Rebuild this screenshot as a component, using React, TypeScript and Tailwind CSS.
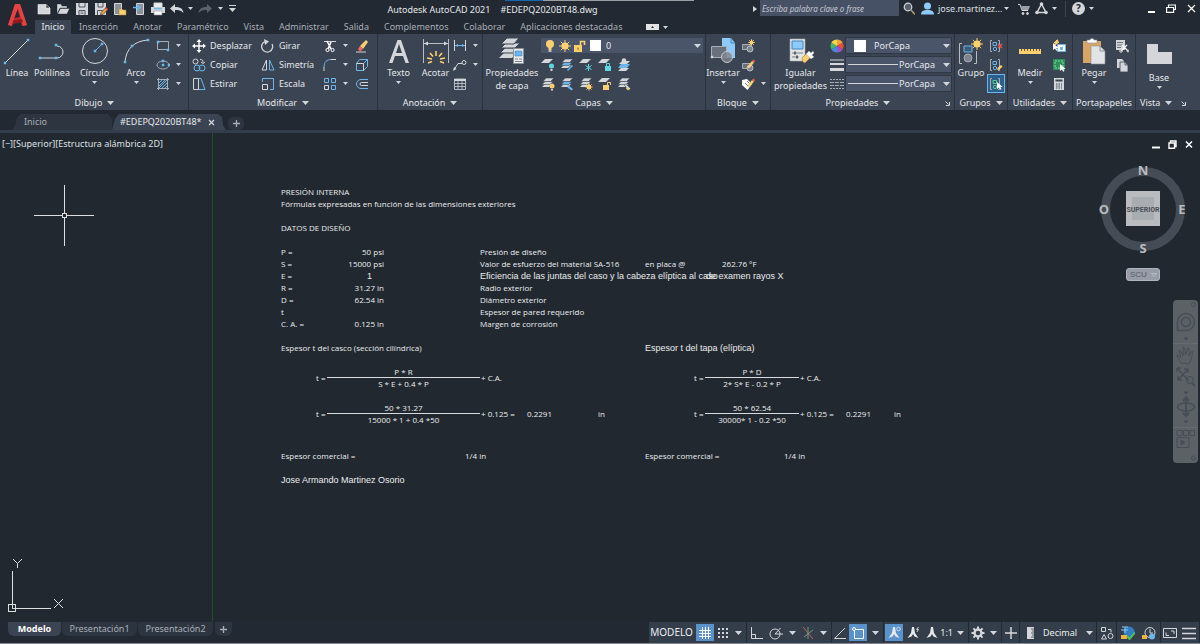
import type { ReactNode } from "react";
import clsx from "clsx";

// Palette shared by the icons
const G = "#d4d6d9";
const B = "#6cb6ec";
const Y = "#fdd06f";

type IconProps = { children: ReactNode; w?: number; h?: number };

const Icon = ({ children, w = 14, h = 14 }: IconProps) => (
  <svg
    width={w}
    height={h}
    viewBox={`0 0 ${w} ${h}`}
    fill="none"
    stroke={G}
    className="block shrink-0"
    aria-hidden="true"
  >
    {children}
  </svg>
);

const Caret = ({ small }: { small?: boolean }) =>
  small ? (
    <Icon w={5} h={3}>
      <path d="M0 0h5L2.5 3z" fill={G} stroke="none" />
    </Icon>
  ) : (
    <Icon w={7} h={4}>
      <path d="M0 0h7L3.5 4z" fill={G} stroke="none" />
    </Icon>
  );

// Small squares on the grip points of the draw tools
const Grip = ({ x, y }: { x: number; y: number }) => (
  <rect x={x - 1} y={y - 1} width="2" height="2" fill={B} stroke={B} strokeWidth="0.5" />
);

// ---------- Quick access toolbar ----------

const QUICK_ICONS: { label: string; icon: ReactNode }[] = [
  {
    label: "Nuevo",
    icon: <path d="M1 2.500h8l4 3.500v6H1z M9 2.500V6h4" fill={G} stroke="#f1f1f1" strokeWidth="0.6" />,
  },
  {
    label: "Abrir",
    icon: <path d="M1 12V2h4l1 2h5v2H4z M4.500 6.500H13.500L11 12H1.500z" fill={G} stroke="#222933" strokeWidth="0.4" />,
  },
  {
    label: "Guardar",
    icon: (
      <>
        <path d="M1 1h12v12H1z" fill={G} stroke="none" />
        <path d="M4 1v4h6V1 M4 13V8.500h6V13" stroke="#505762" />
        <path d="M5.500 10h3M5.500 11.500h3" stroke="#505762" strokeWidth="0.7" />
      </>
    ),
  },
  {
    label: "Guardar como",
    icon: (
      <>
        <path d="M1 1h11v12H1z" fill={G} stroke="none" />
        <path d="M4 1v4h5V1 M3.500 13V8.500h5" stroke="#505762" />
        <path d="M6.500 13l.5-2.500 5-5 2 2-5 5z" fill="#e6a04c" stroke="#222933" strokeWidth="0.6" />
        <path d="M11.500 5.500l2 2" stroke="#d8473c" strokeWidth="1.500" />
      </>
    ),
  },
  {
    label: "Abrir desde Web y Mobile",
    icon: (
      <>
        <path d="M1.500 1.500h7v11h-7z" fill="#8c9097" stroke={G} />
        <path d="M6 13V7h3l1 1h3v5z" fill={Y} stroke="#a8864a" strokeWidth="0.6" />
      </>
    ),
  },
  {
    label: "Guardar en Web y Mobile",
    icon: (
      <>
        <path d="M4.500 1.500h7v11h-7z" fill="#8c9097" stroke={G} />
        <path d="M1 5.500h5M4.500 2.500L8 5.500l-3.500 3" stroke={B} strokeWidth="1.600" />
      </>
    ),
  },
  {
    label: "Trazar",
    icon: (
      <>
        <path d="M3 5V1h8v4" fill="#eee" stroke={G} />
        <path d="M0 5h14v6H0z" fill={G} stroke="none" />
        <path d="M3 6.500h8" stroke={B} strokeWidth="1.500" />
        <path d="M3 9h8v4H3z" fill="#fff" stroke="#8c9097" strokeWidth="0.6" />
      </>
    ),
  },
];

const QuickAccess = () => (
  <div className="flex items-center">
    {QUICK_ICONS.map((q) => (
      <button key={q.label} aria-label={q.label} className="flex w-[19px] justify-center">
        <Icon>{q.icon}</Icon>
      </button>
    ))}
    <button aria-label="Deshacer" className="flex w-[19px] justify-center">
      <Icon>
        <path d="M0 6.500l5-4.500v3c5 0 8 1.500 8.500 6-2-2.500-5-3-8.500-3V11z" fill={G} stroke="none" />
      </Icon>
    </button>
    <button aria-label="Más deshacer" className="flex w-2 justify-center">
      <Caret small />
    </button>
    <button aria-label="Rehacer" className="flex w-[22px] justify-center">
      <Icon>
        <path d="M14 6.500L9 2v3C4 5 1 6.500 .500 11c2-2.500 5-3 8.500-3v3z" fill="#5b616b" stroke="none" />
      </Icon>
    </button>
    <button aria-label="Más rehacer" className="flex w-2 justify-center">
      <Caret small />
    </button>
    <button aria-label="Personalizar" className="flex w-4 justify-center">
      <Icon w={7} h={7}>
        <path d="M0 .500h7" />
        <path d="M0 3h7L3.500 7z" fill={G} stroke="none" />
      </Icon>
    </button>
  </div>
);

const MENU_TABS = [
  "Inserción",
  "Anotar",
  "Paramétrico",
  "Vista",
  "Administrar",
  "Salida",
  "Complementos",
  "Colaborar",
  "Aplicaciones destacadas",
];

const Header = () => (
  <header className="relative flex h-[34px] bg-[#222933]">
    {/* Loading strip over the title bar */}
    <div className="absolute right-[506px] top-0 flex h-px w-[189px]">
      <span className="w-[38px] bg-[#1269b0]" />
      <span className="flex-1 bg-[#9a9da2]" />
    </div>
    <button aria-label="Menú de la aplicación" className="flex w-[34px] shrink-0 items-start justify-center pl-[2px] pt-[3px]">
      <svg width="20" height="24" viewBox="0 0 20 24" aria-hidden="true">
        <path d="M0 22L7 1h5l7 21-5 1-2-6-7 1-1 5z" fill="#c4252b" />
        <path d="M7 1h5l7 21-4 1L10 5 5 18l-1 5-4-1z" fill="#e04545" />
        <path d="M9.500 7l2.500 7-5.500 1z" fill="#222933" />
        <path d="M5 18l9-2 1 3-10 2z" fill="#921b20" />
      </svg>
    </button>
    <div className="flex min-w-0 flex-1 flex-col">
      <div className="flex h-[17px] items-center">
        <QuickAccess />
        <div className="flex min-w-0 flex-1 justify-center self-stretch pr-2">
          <h1 className="flex gap-[10px] whitespace-pre text-[9px] leading-[19px] text-[#e6e8ea]">
            <span>Autodesk AutoCAD 2021</span>
            <span>#EDEPQ2020BT48.dwg</span>
          </h1>
        </div>
        <div className="flex w-[447px] shrink-0 items-center self-stretch">
          <Icon w={4} h={6}>
            <path d="M0 0l4 3-4 3z" fill={G} stroke="none" />
          </Icon>
          <input
            type="text"
            aria-label="Buscar"
            placeholder="Escriba palabra clave o frase"
            className="ml-[3px] h-4 w-[139px] self-start bg-[#475166] px-[2px] text-[8px] italic text-white placeholder:text-[#c3c7ce]"
          />
          <button aria-label="Buscar" className="ml-1">
            <Icon w={12} h={13}>
              <circle cx="5" cy="5" r="3.800" fill="#59606d" strokeWidth="1.200" />
              <path d="M8 8l4 4.500" stroke="#b39b6c" strokeWidth="1.600" />
            </Icon>
          </button>
          <button className="ml-[6px] flex items-center gap-1 text-[9px] leading-[16px] text-[#dfe1e4]">
            <Icon w={13} h={13}>
              <circle cx="6.500" cy="4" r="3.500" fill="#8ecbfb" stroke="none" />
              <path d="M0 12.500c0-3 2-4 4.500-4.500h4c2.500.500 4.500 1.500 4.500 4.500z" fill="#8ecbfb" stroke="none" />
            </Icon>
            <span className="w-[62px] text-left">jose.martinez...</span>
            <Caret small />
          </button>
          <button aria-label="Autodesk App Store" className="ml-[9px]">
            <Icon w={12} h={12}>
              <path d="M0 1.500h2l2 6h6" />
              <path d="M3 3h9l-1.500 4H4z" fill="#9a9ea6" stroke="none" />
              <circle cx="5" cy="10.500" r="1" fill={G} />
              <circle cx="9.500" cy="10.500" r="1" fill={G} />
            </Icon>
          </button>
          <button aria-label="Autodesk 360" className="ml-[5px] flex items-center gap-1">
            <Icon w={13} h={13}>
              <path d="M6.500 2L2 10.500h9L6.500 2z" strokeWidth="1.500" />
              <circle cx="6.500" cy="2" r="1.800" fill={G} stroke="none" />
              <circle cx="2" cy="10.500" r="1.800" fill={G} stroke="none" />
              <circle cx="11" cy="10.500" r="1.800" fill={G} stroke="none" />
            </Icon>
            <Caret small />
          </button>
          <span className="ml-2 h-4 w-px bg-[#3c4553]" />
          <button aria-label="Ayuda" className="ml-[6px] flex items-center gap-1">
            <span className="size-[13px] rounded-full bg-[#d4d6d9] text-[10px] font-bold leading-[13px] text-[#222933]">?</span>
            <Caret small />
          </button>
          <div className="ml-auto flex w-[52px] items-center justify-between pr-1">
            <button aria-label="Minimizar">
              <Icon w={7} h={9}>
                <path d="M0 8h7" stroke="#fff" strokeWidth="2" />
              </Icon>
            </button>
            <button aria-label="Restaurar">
              <Icon w={10} h={9}>
                <path d="M2.500 3V1h7v4.500H8" stroke="#fff" strokeWidth="1.200" />
                <path d="M.600 3.500h7v4.900h-7z" stroke="#fff" strokeWidth="1.200" />
              </Icon>
            </button>
            <button aria-label="Cerrar">
              <Icon w={9} h={9}>
                <path d="M1 1l7 7M8 1L1 8" stroke="#fff" strokeWidth="1.300" />
              </Icon>
            </button>
          </div>
        </div>
      </div>
      <nav className="flex h-[17px] items-end text-[9px] leading-[14px] text-[#a9aeb6]">
        <button className="ml-px w-9 bg-[#3b4453] text-[#e6e8ea]">Inicio</button>
        <div className="flex gap-[15px] pl-2">
          {MENU_TABS.map((tab) => (
            <button key={tab}>{tab}</button>
          ))}
        </div>
        <button aria-label="Minimizar cinta" className="ml-6 flex h-[14px] items-center gap-1">
          <Icon w={13} h={6}>
            <path d="M0 0h13v6H0z" fill="#e4e4e4" stroke="none" />
            <path d="M5 4h3L6.500 2z" fill="#222933" stroke="none" />
          </Icon>
          <Caret small />
        </button>
      </nav>
    </div>
  </header>
);

// ---------- Ribbon building blocks ----------

type PanelProps = {
  title: string;
  className?: string;
  menu?: boolean;
  launcher?: boolean;
  children: ReactNode;
};

const Panel = ({ title, className, menu = true, launcher, children }: PanelProps) => (
  <section className={clsx("flex shrink-0 flex-col border-r border-[#2b323e] bg-[#3b4453]", className)}>
    <div className="flex h-[62px] pt-[2px]">{children}</div>
    <div className="flex h-[14px] items-center">
      <button className="flex flex-1 items-center justify-center gap-[5px] whitespace-nowrap leading-[14px]">
        {title}
        {menu && <Caret />}
      </button>
      {launcher && (
        <button aria-label={`Cuadro de ${title}`} className="pr-1">
          <Icon w={5} h={5}>
            <path d="M.500.500l3 3M4.500 1v3.500H1" />
          </Icon>
        </button>
      )}
    </div>
  </section>
);

type BigButtonProps = { label: string; icon: ReactNode; className?: string; caret?: boolean };

const BigButton = ({ label, icon, className, caret }: BigButtonProps) => (
  <button className={clsx("flex shrink-0 flex-col items-center", className)}>
    <span className="flex h-[30px] items-center">
      <Icon w={28} h={28}>
        {icon}
      </Icon>
    </span>
    <span className="whitespace-pre leading-[13px]">{label}</span>
    {caret && (
      <span className="mt-[2px]">
        <Caret small />
      </span>
    )}
  </button>
);

type ToolProps = { name: string; icon: ReactNode; text?: boolean; caret?: boolean; active?: boolean };

const Tool = ({ name, icon, text, caret, active }: ToolProps) => (
  <button
    aria-label={name}
    className={clsx("flex h-[19px] shrink-0 items-center gap-1", active && "bg-[#2c5f8a] px-[2px] outline outline-[#6cb6ec] -outline-offset-1")}
  >
    <Icon>{icon}</Icon>
    {text && <span>{name}</span>}
    {caret && (
      <span className="pl-[2px]">
        <Caret small />
      </span>
    )}
  </button>
);

// Stack of sheets used by every layer tool
const Sheets = ({ tint = G }: { tint?: string }) => (
  <g stroke="none">
    <path d="M1 10l3-3h7l-3 3z" fill={G} />
    <path d="M1 7.500l3-3h8l-3 3z" fill={tint} stroke="#3b4453" strokeWidth="0.6" />
    <path d="M2 4.500L5 1h8L9.500 4.500z" fill={G} stroke="#3b4453" strokeWidth="0.6" />
  </g>
);

const Sheet = () => <path d="M0 5l4-4h8L8 5z" fill={G} stroke="none" />;

const Sun = ({ x, y, r = 2 }: { x: number; y: number; r?: number }) => (
  <g stroke={Y} strokeWidth="1">
    <circle cx={x} cy={y} r={r * 1.2} fill={Y} stroke="none" />
    <path
      d={`M${x - 2 * r} ${y}h${4 * r}M${x} ${y - 2 * r}v${4 * r}M${x - 1.4 * r} ${y - 1.4 * r}l${2.8 * r} ${2.8 * r}M${x + 1.4 * r} ${y - 1.4 * r}l${-2.8 * r} ${2.8 * r}`}
    />
  </g>
);

const Cursor = ({ x, y }: { x: number; y: number }) => (
  <path d={`M${x} ${y}v7l2-1.500 1.200 2.300 1.300-.700-1.200-2.200h2.300z`} fill="#fff" stroke="none" />
);

const Pencil = () => (
  <>
    <path d="M7 8l4-5 2 1.500-4 5-2.500 1z" fill={Y} stroke="none" />
    <path d="M11 3l1.200-1.500 2 1.500L13 4.500z" fill="#e8574b" stroke="none" />
  </>
);

const DrawPanel = () => (
  <Panel title="Dibujo" className="w-[188px]">
    <BigButton
      label="Línea"
      className="w-8"
      icon={
        <>
          <path d="M2 26L25 3" />
          <Grip x={2} y={26} />
          <Grip x={25} y={3} />
        </>
      }
    />
    <BigButton
      label="Polilínea"
      className="w-[38px]"
      icon={
        <>
          <path d="M2 21h17a6 6 0 0 0 0-12" />
          <Grip x={2} y={21} />
          <Grip x={18} y={21} />
          <Grip x={18} y={8} />
        </>
      }
    />
    <BigButton
      label="Círculo"
      className="w-[47px]"
      caret
      icon={
        <>
          <circle cx="14" cy="14" r="12.500" />
          <path d="M14 14l7-7" stroke={B} />
          <Grip x={14} y={14} />
          <Grip x={21} y={7} />
        </>
      }
    />
    <BigButton
      label="Arco"
      className="w-[36px]"
      caret
      icon={
        <>
          <path d="M3 25C4 12 12 4 26 3" />
          <Grip x={3} y={25} />
          <Grip x={10} y={9} />
          <Grip x={26} y={3} />
        </>
      }
    />
    <div className="pl-[2px]">
      <Tool
        name="Rectángulo"
        caret
        icon={
          <>
            <path d="M1.500 2.500h11v8h-11z" stroke="#a9adb4" />
            <Grip x={2} y={3} />
            <Grip x={12} y={11} />
          </>
        }
      />
      <Tool
        name="Elipse"
        caret
        icon={
          <>
            <ellipse cx="7" cy="7" rx="6" ry="4" stroke="#a9adb4" />
            <Grip x={7} y={7} />
            <Grip x={7} y={3} />
            <Grip x={13} y={7} />
          </>
        }
      />
      <Tool
        name="Sombreado"
        caret
        icon={
          <>
            <path d="M2.500 1v12M11.500 1v12M1 2.500h12M1 11.500h12" stroke="#a9adb4" />
            <path d="M3 6l3-3M3 9l6-6M3 11l8-8M6 11l5-5M9 11l2-2" stroke={B} />
          </>
        }
      />
    </div>
  </Panel>
);

const ModifyPanel = () => (
  <Panel title="Modificar" className="w-[189px]">
    <div className="w-[69px] pl-[3px]">
      <Tool
        name="Desplazar"
        text
        icon={
          <>
            <path d="M7 1v12M1 7h12" strokeWidth="1.400" stroke="#fff" />
            <path d="M7 0l2.500 3h-5zM7 14l2.500-3h-5zM0 7l3-2.500v5zM14 7l-3-2.500v5z" fill="#fff" stroke="none" />
          </>
        }
      />
      <Tool
        name="Copiar"
        text
        icon={
          <>
            <circle cx="3.500" cy="3.500" r="2.500" />
            <path d="M8 1.500c3 0 3 1 3 3M9 4l2 1.500L13 4" />
            <circle cx="5" cy="10" r="3" stroke={B} />
            <circle cx="10" cy="10" r="3" stroke={B} />
          </>
        }
      />
      <Tool
        name="Estirar"
        text
        icon={
          <>
            <path d="M1.500 1.500h5v11h-5zM3 12.500h5" />
            <path d="M7 1.500l2 0 4 11H7" stroke={B} />
          </>
        }
      />
    </div>
    <div className="w-[61px] pl-[3px]">
      <Tool
        name="Girar"
        text
        icon={
          <>
            <path d="M4 2.500a5.500 5.500 0 1 0 7 2.500" strokeWidth="1.300" />
            <path d="M3 0l5 2.500L4 6z" fill={G} stroke="none" />
          </>
        }
      />
      <Tool
        name="Simetría"
        text
        icon={
          <>
            <path d="M5.500 2v10H1z" />
            <path d="M8.500 2v10H13z" stroke={B} />
          </>
        }
      />
      <Tool
        name="Escala"
        text
        icon={
          <>
            <path d="M1.500 7.500h5v5h-5z" />
            <path d="M1.500 5V1.500h11v11H9" stroke={B} />
          </>
        }
      />
    </div>
    <div className="w-8 pl-1">
      <Tool
        name="Recortar"
        caret
        icon={
          <>
            <path d="M1 2.500h12" />
            <path d="M4 2l4 8M8 3L5 10" stroke="#fff" strokeWidth="1.600" />
            <circle cx="4.500" cy="11" r="1.600" stroke="#fff" />
            <circle cx="9.500" cy="11" r="1.600" stroke="#fff" />
          </>
        }
      />
      <Tool
        name="Empalme"
        caret
        icon={
          <>
            <path d="M1 13V9M8 1.500h5" />
            <path d="M1 9c0-5 3-7.500 7-7.500" stroke={B} />
          </>
        }
      />
      <Tool
        name="Matriz"
        caret
        icon={
          <>
            <path d="M1.500 1.500h4v4h-4zM8.500 1.500h4v4h-4zM8.500 8.500h4v4h-4z" stroke={B} />
            <path d="M1.500 8.500h4v4h-4z" />
          </>
        }
      />
    </div>
    <div className="pl-1">
      <Tool
        name="Borrar"
        icon={
          <>
            <path d="M5 7l6-6 2 2-5 7z" fill={Y} stroke="none" />
            <path d="M5 7l3 3-3 2.500L3 10z" fill="#f26a5c" stroke="none" />
            <path d="M1 13h10" stroke={G} />
          </>
        }
      />
      <Tool
        name="Descomponer"
        icon={
          <>
            <path d="M1.500 5.500h7v7h-7zM1.500 5.500l3-4h8v7l-4 4M8.500 5.500l4-4" stroke={B} />
            <path d="M1.500 5.500h7v7" />
          </>
        }
      />
      <Tool
        name="Desfase"
        icon={
          <>
            <path d="M13 2.500H6a4.500 4.500 0 0 0 0 9h7" stroke={B} />
            <path d="M13 5.500H6.500a1.500 1.500 0 0 0 0 3H13" />
          </>
        }
      />
    </div>
  </Panel>
);

const AnnotationPanel = () => (
  <Panel title="Anotación" className="w-[105px]">
    <BigButton
      label="Texto"
      className="w-[41px]"
      caret
      icon={<path d="M4 26L12.500 3h3.500L24 26h-3.500l-2.500-7h-8l-2.500 7zM11 16h6L14 7z" fill={G} stroke="none" />}
    />
    <BigButton
      label="Acotar"
      className="w-[33px]"
      icon={
        <>
          <path d="M1.500 2v24M26.500 2v24M2 6.500h24" stroke="#b9bcc2" />
          <path d="M2 6.500l4-2v4zM26 6.500l-4-2v4z" fill={G} stroke="none" />
          <path d="M14 14v5M8 16l3 3.500M20 16l-3 3.500M5 21l5 1M23 21l-5 1M6 26l4-1.500M22 26l-4-1.500" stroke={Y} strokeWidth="1.600" />
        </>
      }
    />
    <div className="pl-px">
      <Tool
        name="Cota lineal"
        caret
        icon={
          <>
            <path d="M1.500 1v11M12.500 1v11" />
            <path d="M2 6.500h10" stroke={B} />
            <path d="M2 6.500l3-1.500v3zM12 6.500L9 5v3z" fill={B} stroke="none" />
          </>
        }
      />
      <Tool
        name="Directriz"
        caret
        icon={
          <>
            <path d="M1.500 11L5 5.500h4" />
            <path d="M0 13l1-4 2.500 2z" fill={G} stroke="none" />
            <circle cx="11" cy="4.500" r="2" />
          </>
        }
      />
      <Tool
        name="Tabla"
        icon={
          <>
            <path d="M1.500 2h11v10.500h-11zM1.500 6.500h11M1.500 9.500h11M5 4v8M9 4v8" stroke="#b4b7bd" />
            <path d="M1 3h12" strokeWidth="2" />
          </>
        }
      />
    </div>
  </Panel>
);

const LAYER_TOOLS: { name: string; icon: ReactNode }[] = [
  {
    name: "Desactivar capa",
    icon: (
      <>
        <Sheet />
        <circle cx="10.500" cy="8" r="2.500" fill="#5fd6e0" stroke="none" />
        <path d="M9.500 11h2v2h-2z" fill={G} stroke="none" />
      </>
    ),
  },
  {
    name: "Aislar",
    icon: (
      <>
        <Sheets tint={B} />
        <path d="M7 12l5-5 1 1-5 5z" fill={B} stroke="none" />
      </>
    ),
  },
  {
    name: "Inutilizar",
    icon: (
      <>
        <Sheet />
        <path d="M9.500 6v7M6.500 7.500l6 4M12.500 7.500l-6 4" stroke="#5fd6e0" />
      </>
    ),
  },
  {
    name: "Bloquear",
    icon: (
      <>
        <Sheet />
        <path d="M7 8h6v5H7z" fill="#5fd6e0" stroke="none" />
        <path d="M8.500 8V5.500h3V8" stroke="#5fd6e0" />
      </>
    ),
  },
  {
    name: "Definir como actual",
    icon: (
      <>
        <path d="M1 13l3-3h8l-3 3z" fill={G} stroke="none" />
        <path d="M1 10l3-4h9l-3 4z" fill={B} stroke="none" />
        <path d="M2 6l3-3h8l-3 3z" fill={G} stroke="none" />
        <circle cx="7" cy="2.500" r="2.300" fill={G} stroke="none" />
      </>
    ),
  },
  {
    name: "Activar todas",
    icon: (
      <>
        <Sheets />
        <circle cx="11" cy="9" r="2.500" fill={Y} stroke="none" />
        <path d="M10 12h2v1.500h-2z" fill={G} stroke="none" />
      </>
    ),
  },
  {
    name: "Desaislar",
    icon: (
      <>
        <Sheets tint={B} />
        <path d="M8 8l5 4-1.500 1.500L7 10z" fill={B} stroke="none" />
      </>
    ),
  },
  {
    name: "Reutilizar todas",
    icon: (
      <>
        <Sheets />
        <Sun x={10} y={10} r={1.8} />
      </>
    ),
  },
  {
    name: "Desbloquear",
    icon: (
      <>
        <Sheet />
        <path d="M5 8h6v5H5z" fill={Y} stroke="none" />
        <path d="M9.500 8V5.500h3V8" stroke={Y} />
      </>
    ),
  },
  {
    name: "Igualar capa",
    icon: (
      <>
        <Sheets />
        <path d="M7 8l2-1 4.500 4.500-1.500 2z" fill={G} stroke="#3b4453" strokeWidth="0.5" />
        <path d="M10 10l2 2-1 1.500-2-2z" fill={Y} stroke="none" />
      </>
    ),
  },
];

const LayersPanel = () => (
  <Panel title="Capas" className="w-[223px]">
    <BigButton
      label={"Propiedades\nde capa"}
      className="w-[58px]"
      icon={
        <>
          <path d="M1 21l5-5h13l-5 5z" fill={G} stroke="none" />
          <path d="M2 16l5-5h14l-5 5z" fill={G} stroke="#3b4453" />
          <path d="M3 11l5-5h14l-5 5z" fill={G} stroke="#3b4453" />
          <path d="M3 7l6-6h12l-5 6z" fill={G} stroke="#3b4453" />
          <path d="M15.500 11.500h10v15h-10z" fill="#eceded" stroke="#8c9097" />
          <path d="M17 14h7v5h-7z" fill={B} stroke="#3e86bd" strokeWidth="0.6" />
          <path d="M17 22h3M21 22h3M17 24.500h7" stroke="#7a7f87" />
        </>
      }
    />
    <div className="flex-1 pr-[2px]">
      <div className="mt-[2px] flex h-[15px] items-center gap-[1px] bg-[#4a556a] pl-[2px]">
        <Icon>
          <circle cx="7" cy="5" r="4" fill={Y} stroke="none" />
          <path d="M5.500 8h3v3h-3z" fill={Y} stroke="none" />
          <path d="M5.500 12h3" stroke={G} strokeWidth="1.600" />
        </Icon>
        <Icon>
          <Sun x={7} y={7} r={3} />
        </Icon>
        <Icon>
          <path d="M1 6h8v7H1z" fill={Y} stroke="none" />
          <path d="M7.500 6V2.500h4V6" stroke={Y} strokeWidth="1.600" />
          <path d="M5 8.500v2.500" stroke="#6b5a33" />
        </Icon>
        <span className="ml-[2px] size-[11px] bg-white" />
        <select aria-label="Capa actual" className="ml-1 flex-1 appearance-none bg-transparent text-[9px] leading-[14px]">
          <option>0</option>
        </select>
        <span className="pointer-events-none pr-[2px]">
          <Caret />
        </span>
      </div>
      <div className="mt-[2px] grid grid-cols-[repeat(5,19px)]">
        {LAYER_TOOLS.map((t) => (
          <Tool key={t.name} {...t} />
        ))}
      </div>
    </div>
  </Panel>
);

// Rectangle with a disc, the sign for a block
const BlockSign = () => (
  <>
    <path d="M1.500 5.500h8v5h-8z" fill="#6a717c" stroke="#a9adb4" />
    <circle cx="9" cy="10" r="3" fill="#7f858f" stroke="#b9bcc2" />
  </>
);

const BlockPanel = () => (
  <Panel title="Bloque" className="w-[65px]">
    <BigButton
      label="Insertar"
      className="w-[34px]"
      caret
      icon={
        <>
          <path d="M13 1h9l4 5v15H13z" fill="#8ecbfb" stroke="none" />
          <path d="M22 1v5h4" stroke="#3e86bd" />
          <path d="M2.500 9.500h15v11h-15z" fill="#6a717c" stroke="#a9adb4" />
          <circle cx="18" cy="20" r="5.500" fill="#7f858f" fillOpacity="0.8" stroke="#c4c6ca" />
          <circle cx="3" cy="20" r="1" fill={G} />
        </>
      }
    />
    <div className="pl-[1px]">
      <Tool
        name="Crear bloque"
        icon={
          <>
            <BlockSign />
            <Sun x={10.500} y={3.500} r={1.600} />
          </>
        }
      />
      <Tool
        name="Editar bloque"
        icon={
          <>
            <BlockSign />
            <Pencil />
          </>
        }
      />
      <Tool
        name="Editar atributos"
        caret
        icon={
          <>
            <path d="M1 3l5-1 5 5-4.500 6L1 8z" fill="#fff" stroke="none" />
            <path d="M4 6l3 3M6 4l3 3" stroke="#7a7f87" />
            <Pencil />
          </>
        }
      />
    </div>
  </Panel>
);

type PropertySelectProps = { name: string; lead: ReactNode; className: string };

const PropertySelect = ({ name, lead, className }: PropertySelectProps) => (
  <div className="flex h-[17px] w-[107px] items-center border border-[#2f3744] bg-[#4a556a]">
    {lead}
    <select aria-label={name} className={clsx("w-0 flex-1 appearance-none bg-transparent text-[9px] leading-[14px]", className)}>
      <option>PorCapa</option>
    </select>
    <span className="pointer-events-none pr-px">
      <Caret />
    </span>
  </div>
);

const PropertiesPanel = () => (
  <Panel title="Propiedades" className="w-[184px]" launcher>
    <BigButton
      label={"Igualar\npropiedades"}
      className="w-[59px]"
      icon={
        <>
          <path d="M3 2h15v22H3z" fill="#e2e3e4" stroke="#a9adb4" strokeWidth="0.6" />
          <path d="M5 4h11v8H5z" fill="#8ecbfb" stroke="#3e86bd" />
          <path d="M5 16h11M5 20h7" stroke="#7a7f87" />
          <path d="M8 14.500v3M10 18.500v3" stroke="#5b616b" strokeWidth="2" />
          <path d="M15 21l4-4 4 4-5 5-2-1z" fill={Y} stroke="#8a6f38" strokeWidth="0.5" />
          <path d="M19 17l3-3 2 2 2-2 1 2-2 2 2 2-3 2z" fill="#fff" stroke="none" />
        </>
      }
    />
    <div className="flex flex-col">
      <Tool
        name="Color"
        icon={
          <g stroke="none">
            <path d="M7 7V.500A6.500 6.500 0 0 1 12.600 3.800z" fill="#f2a13c" />
            <path d="M7 7l5.600-3.200a6.500 6.500 0 0 1 0 6.400z" fill="#ec4b3f" />
            <path d="M7 7l5.600 3.200A6.500 6.500 0 0 1 7 13.500z" fill="#a44fc4" />
            <path d="M7 7v6.500a6.500 6.500 0 0 1-5.600-3.300z" fill="#3f8de0" />
            <path d="M7 7l-5.600 3.200a6.500 6.500 0 0 1 0-6.400z" fill="#45b96b" />
            <path d="M7 7L1.400 3.800A6.500 6.500 0 0 1 7 .500z" fill="#f7d64c" />
          </g>
        }
      />
      <Tool
        name="Grosor de línea"
        icon={
          <>
            <path d="M0 2h14" />
            <path d="M0 6h14" strokeWidth="2" />
            <path d="M0 11.500h14" strokeWidth="3" />
          </>
        }
      />
      <Tool
        name="Tipo de línea"
        icon={
          <>
            <path d="M0 2.500h14M0 11.500h14" strokeDasharray="2 1" stroke="#a9adb4" />
            <path d="M0 5.500h14M0 8.500h14" strokeDasharray="4 1" stroke="#a9adb4" />
          </>
        }
      />
    </div>
    <div className="ml-px flex flex-col gap-[2px] pt-px">
      <PropertySelect name="Color de objeto" lead={<span className="ml-2 size-3 bg-white" />} className="pl-2" />
      <PropertySelect name="Grosor de objeto" lead={<span className="ml-[2px] h-px w-[50px] bg-[#d4d6d9]" />} className="pl-px" />
      <PropertySelect name="Tipo de objeto" lead={<span className="ml-[2px] h-px w-[50px] bg-[#d4d6d9]" />} className="pl-px" />
    </div>
  </Panel>
);

const GroupSign = ({ color = B }: { color?: string }) => (
  <>
    <path d="M3 1.500H1.500v11H3M9 1.500h1.500v11H9" stroke="#a9adb4" />
    <path d="M4 3.500h3.500v3H4z" stroke={color} />
    <circle cx="6" cy="10" r="1.700" stroke={color} />
  </>
);

const GroupsPanel = () => (
  <Panel title="Grupos" className="w-[53px]">
    <BigButton
      label="Grupo"
      className="w-8"
      icon={
        <>
          <path d="M5 6.500H2.500v20H5M17 26.500h2.500V14" stroke="#b9bcc2" />
          <path d="M7 9h8v6H7z" stroke={B} fill="#3a5a78" />
          <circle cx="11" cy="21" r="4" fill="#7f858f" stroke="#a9adb4" />
          <Sun x={20} y={7} r={3} />
        </>
      }
    />
    <div className="flex w-[18px] flex-col items-center">
      <Tool
        name="Desagrupar"
        icon={
          <>
            <GroupSign />
            <path d="M9 5l4 4M13 5L9 9" stroke="#e8574b" strokeWidth="1.500" />
          </>
        }
      />
      <Tool
        name="Editar grupo"
        icon={
          <>
            <GroupSign />
            <path d="M8 12l1-2.500L12 7l1.500 1.500-3 3z" fill={Y} stroke="none" />
          </>
        }
      />
      <Tool
        name="Selección de grupo"
        active
        icon={
          <>
            <GroupSign color="#58c98c" />
            <Cursor x={8} y={5} />
          </>
        }
      />
    </div>
  </Panel>
);

const UtilitiesPanel = () => (
  <Panel title="Utilidades" className="w-[65px]">
    <BigButton
      label="Medir"
      className="w-[44px]"
      caret
      icon={
        <>
          <path d="M3 12h22v5H3z" fill={Y} stroke="none" />
          <path d="M5.500 12v2M8.500 12v2M11.500 12v2M14.500 12v2M17.500 12v2M20.500 12v2M23.500 12v2" stroke="#6b5a33" />
        </>
      }
    />
    <div>
      <Tool
        name="Selección rápida"
        icon={
          <>
            <path d="M5 1l-3 3h2L3 6l4-3H5l1-2z" fill={Y} stroke={Y} />
            <path d="M5.500 5.500h8v7h-8z" fill="#fff" stroke={B} />
            <path d="M8 8h3v3H8z" fill={B} stroke="none" />
            <Cursor x={1} y={4} />
          </>
        }
      />
      <Tool
        name="Seleccionar todo"
        icon={
          <>
            <path d="M1 1h12v11H1z" fill="#2e8f5b" stroke="none" />
            <path d="M3 3h8v7H3z" stroke="#7fe0a9" strokeDasharray="2 1" />
            <Cursor x={8} y={6} />
          </>
        }
      />
      <Tool
        name="Calculadora"
        icon={
          <>
            <path d="M2 1h10v12H2z" fill={G} stroke="none" />
            <path d="M3.500 2.500h7v2h-7z" fill="#3b4453" stroke="none" />
            <path d="M4 7h6M4 9h6M4 11h6" stroke="#3b4453" strokeDasharray="1.500 1" />
          </>
        }
      />
    </div>
  </Panel>
);

const ClipboardPanel = () => (
  <Panel title="Portapapeles" className="w-[63px]" menu={false}>
    <BigButton
      label="Pegar"
      className="w-[42px]"
      caret
      icon={
        <>
          <path d="M3 4h18v22H3z" fill="#d9a566" stroke="none" />
          <path d="M7 6V3h3c0-2 4-2 4 0h3v3z" fill="#fff" stroke="#8c9097" strokeWidth="0.6" />
          <path d="M11 9h9l5 5v13H11z" fill="#e2e3e4" stroke="#8c9097" strokeWidth="0.6" />
          <path d="M20 9v5h5" stroke="#8c9097" />
        </>
      }
    />
    <div>
      <Tool
        name="Cortar"
        icon={
          <>
            <path d="M1 1h9v10H1z" fill={G} stroke="none" />
            <path d="M2 3.500h6M2 6h6M2 8.500h4" stroke="#6a717c" />
            <path d="M6 12l6-6M7 6l6 6" stroke="#fff" strokeWidth="1.300" />
            <circle cx="6" cy="12" r="1.300" />
            <circle cx="13" cy="12" r="1" />
          </>
        }
      />
      <Tool
        name="Copiar"
        icon={
          <>
            <path d="M2 1h5l2 2v7H2z" fill={G} stroke="none" />
            <path d="M5 4h5l3 3v7H5z" fill={G} stroke="#3b4453" strokeWidth="0.8" />
            <path d="M10 4v3h3" stroke="#3b4453" strokeWidth="0.8" />
          </>
        }
      />
    </div>
  </Panel>
);

const ViewPanel = () => (
  <section className="flex min-w-[64px] flex-1 flex-col bg-[#3b4453]">
    <div className="h-[62px] pt-[7px]">
      <BigButton label="Base" className="w-[46px]" caret icon={<path d="M2 2h11v8h14v12H2z" fill={G} stroke="none" />} />
    </div>
    <div className="flex h-[14px] items-center gap-[9px] pl-1">
      <button className="flex items-center gap-[5px] leading-[14px]">
        Vista
        <Caret />
      </button>
      <button aria-label="Cuadro de Vista">
        <Icon w={5} h={5}>
          <path d="M.500.500l3 3M4.500 1v3.500H1" />
        </Icon>
      </button>
    </div>
  </section>
);

const Ribbon = () => (
  <div className="flex h-[76px] overflow-hidden bg-[#3b4453] pl-px text-[9px] text-[#e6e8ea]">
    <DrawPanel />
    <ModifyPanel />
    <AnnotationPanel />
    <LayersPanel />
    <BlockPanel />
    <PropertiesPanel />
    <GroupsPanel />
    <UtilitiesPanel />
    <ClipboardPanel />
    <ViewPanel />
  </div>
);

// ---------- File tabs ----------

const FileTabs = () => (
  <div className="flex h-[23px] items-end border-b-[3px] border-[#343d4b] bg-[#222933] pl-[12px] text-[9px] leading-4">
    <button className="h-4 w-[100px] bg-[#2d3541] pl-3 text-left text-[#a9aeb6] [clip-path:polygon(0_100%,3px_70%,5px_20%,9px_0,calc(100%-4px)_0,100%_30%,100%_100%)]">
      Inicio
    </button>
    <div className="flex h-4 w-[114px] items-center bg-[#3b4453] pl-2 text-[#e6e8ea] [clip-path:polygon(0_100%,3px_30%,7px_0,calc(100%-8px)_0,calc(100%-4px)_20%,calc(100%-3px)_70%,100%_100%)]">
      <button>#EDEPQ2020BT48*</button>
      <button aria-label="Cerrar archivo" className="ml-[6px]">
        <Icon w={7} h={7}>
          <path d="M1 1l5 5M6 1L1 6" strokeWidth="1.300" />
        </Icon>
      </button>
    </div>
    <button aria-label="Nuevo dibujo" className="ml-[2px] flex h-[13px] w-4 items-center justify-center rounded-[5px] bg-[#2d3541]">
      <Icon w={7} h={7}>
        <path d="M3.500 0v7M0 3.500h7" stroke="#a9aeb6" strokeWidth="1.300" />
      </Icon>
    </button>
  </div>
);

// ---------- Drawing ----------

type DataRow = { symbol: string; value: string; text: string; large?: boolean };

const DESIGN_DATA: DataRow[] = [
  { symbol: "P =", value: "50 psi", text: "Presión de diseño" },
  { symbol: "S =", value: "15000 psi", text: "Valor de esfuerzo del material SA-516" },
  {
    symbol: "E =",
    value: "1",
    text: "Eficiencia de las juntas del caso y la cabeza elíptica al caso",
    large: true,
  },
  { symbol: "R =", value: "31.27 in", text: "Radio exterior" },
  { symbol: "D =", value: "62.54 in", text: "Diámetro exterior" },
  { symbol: "t", value: "", text: "Espesor de pared requerido" },
  { symbol: "C. A. =", value: "0.125 in", text: "Margen de corrosión" },
];

type FormulaProps = {
  top: string;
  bottom: string;
  rest: string;
  barClass: string;
  result?: string;
  resultClass?: string;
};

const Formula = ({ top, bottom, rest, barClass, result, resultClass }: FormulaProps) => (
  <div className="flex h-6 items-center">
    <span className="w-[11px]">t =</span>
    <div className={clsx("text-center", barClass)}>
      <div className="h-3 border-b border-[#d9dadc] leading-[12px]">{top}</div>
      <div className="h-3">{bottom}</div>
    </div>
    <span className="w-[47px] pl-px">{rest}</span>
    {result && (
      <>
        <span className={resultClass}>{result}</span>
        <span>in</span>
      </>
    )}
  </div>
);

const Sheet2D = () => (
  <article className="whitespace-pre pl-[281px] pt-[53px] font-['Open_Sans','Noto_Sans',sans-serif] text-[8px] leading-[12px] text-[#eceded]">
    <p>PRESIÓN INTERNA</p>
    <p>Fórmulas expresadas en función de las dimensiones exteriores</p>
    <p className="mt-3">DATOS DE DISEÑO</p>
    <table className="mt-3 w-[620px] table-fixed">
      <tbody>
        {DESIGN_DATA.map((row) => (
          <tr key={row.symbol} className="h-3">
            <td className="w-[43px] p-0">{row.symbol}</td>
            <td className={clsx("w-[60px] p-0 text-right", row.large && "pr-3 font-['Liberation_Sans'] text-[9px]")}>{row.value}</td>
            <td className={clsx("w-[261px] p-0 pl-24", row.large && "font-['Liberation_Sans'] text-[9px]")}>{row.text}</td>
            <td className={clsx("w-[77px] p-0", row.large && "pl-[61px] font-['Liberation_Sans'] text-[9px]")}>
              {row.symbol === "S =" && "en placa @"}
              {row.large && "de examen rayos X"}
            </td>
            <td className="p-0">{row.symbol === "S =" && "262.76 °F"}</td>
          </tr>
        ))}
      </tbody>
    </table>
    <div className="mt-3 flex">
      <section className="w-[364px]">
        <h2>Espesor t del casco (sección cilíndrica)</h2>
        <div className="mt-3 flex flex-col gap-3 pl-[35px]">
          <Formula top="P * R" bottom="S * E + 0.4 * P" rest="+ C.A." barClass="w-[153px]" />
          <Formula
            top="50 * 31.27"
            bottom="15000 * 1 + 0.4 *50"
            rest="+ 0.125 ="
            barClass="w-[153px]"
            result="0.2291"
            resultClass="w-[71px]"
          />
        </div>
        <p className="mt-6 flex">
          <span className="w-[184px]">Espesor comercial =</span>
          <span>1/4 in</span>
        </p>
      </section>
      <section>
        <h2 className="font-['Liberation_Sans'] text-[9px]">Espesor t del tapa (elíptica)</h2>
        <div className="mt-3 flex flex-col gap-3 pl-[49px]">
          <Formula top="P * D" bottom="2* S* E - 0.2 * P" rest="+ C.A." barClass="w-[94px]" />
          <Formula
            top="50 * 62.54"
            bottom="30000* 1 - 0.2 *50"
            rest="+ 0.125 ="
            barClass="w-[94px]"
            result="0.2291"
            resultClass="w-[48px]"
          />
        </div>
        <p className="mt-6 flex">
          <span className="w-[139px]">Espesor comercial =</span>
          <span>1/4 in</span>
        </p>
      </section>
    </div>
    <p className="mt-3 font-['Liberation_Sans'] text-[9px]">Jose Armando Martinez Osorio</p>
  </article>
);

const ViewCube = () => (
  <svg
    width="90"
    height="94"
    viewBox="0 0 90 94"
    className="absolute right-[12px] top-[29px] font-['Open_Sans','Noto_Sans',sans-serif] font-bold"
    textAnchor="middle"
    aria-label="ViewCube"
  >
    <circle cx="45" cy="47" r="37.500" fill="none" stroke="#454c55" strokeWidth="9" />
    <rect x="28" y="29" width="34" height="35" fill="#b9bbbe" />
    <rect x="34" y="35" width="22" height="23" fill="#a9adb1" />
    <text x="45" y="50" fontSize="7" fill="#4a4f57" className="font-['Roboto']">
      SUPERIOR
    </text>
    <g fontSize="13" fill="#b9bbbe">
      <text x="45" y="13">N</text>
      <text x="45" y="91">S</text>
      <text x="6" y="52">O</text>
      <text x="84" y="52">E</text>
    </g>
  </svg>
);

const NavBar = () => (
  <div className="absolute right-[2px] top-[167px] h-[163px] w-[25px] rounded-sm bg-[#5c6166]">
    <svg width="25" height="163" viewBox="0 0 25 163" fill="none" stroke="#474d56" aria-hidden="true">
      <circle cx="20.500" cy="4.500" r="2" />
      <path d="M4.500 22a8.500 8.500 0 1 1 8.500 8.500H4.500z" strokeWidth="1.500" />
      <circle cx="13" cy="22" r="4.500" strokeWidth="1.500" />
      <path d="M11 38h4l-2 2z" fill="#474d56" />
      <path d="M0 43.500h25M0 127.500h25" stroke="#666b70" />
      <path d="M8 63c-2-4-4-6-4-8 2 0 3 2 4 3l-2-8c2 0 3 4 4 6V47c2 0 2 5 2.500 8L15 48c2 0 1 5 1 8l3-5c2 1-1 6-1 9l-2 4z" />
      <path d="M4 68l12 13M15 69L5 80M4 68h4M4 68v4M15 69h-4M15 69v4M5 80h4M5 80v-4" strokeWidth="1.300" />
      <circle cx="17" cy="80" r="3.500" />
      <path d="M19 83l3 3" strokeWidth="2" />
      <path d="M11 92h4l-2 2z" fill="#474d56" />
      <ellipse cx="13" cy="107" rx="8.500" ry="4" strokeWidth="1.500" />
      <path d="M13 98v18M10 101l3-3.500 3 3.500M10 113l3 3 3-3" strokeWidth="2" />
      <path d="M11 121h4l-2 2z" fill="#474d56" />
      <path d="M4 130.500h5v5H4zM10.500 130.500h5v5h-5zM17 130.500h4.500v5H17zM4 137.500h12v10H4z" />
      <path d="M8 140v5l4-2.500z" fill="#474d56" />
      <circle cx="20.500" cy="158" r="2" />
    </svg>
  </div>
);

const Canvas = () => (
  <main className="relative flex-1 overflow-hidden bg-[#212830]">
    {/* Green axis of the grid origin */}
    <span className="absolute inset-y-0 left-[212px] w-px bg-[#1f5126]" />

    <p className="absolute left-[2px] top-1 text-[9px] leading-[13px] text-[#dfe1e4]">
      [−][Superior][Estructura alámbrica 2D]
    </p>

    {/* Crosshair */}
    <svg width="61" height="62" viewBox="0 0 61 62" fill="none" stroke="#dcdee0" className="absolute left-[34px] top-[52px]" aria-hidden="true">
      <path d="M0 30.500h28M32 30.500h28M30.500 0v28.500M30.500 32.500v28.500" />
      <rect x="28.500" y="28.500" width="4" height="4" />
    </svg>

    {/* UCS icon */}
    <svg width="60" height="58" viewBox="0 0 60 58" fill="none" stroke="#dcdee0" className="absolute bottom-[5px] left-[6px]" aria-hidden="true">
      <path d="M6.500 13v37.500H45" />
      <rect x="2.500" y="46.500" width="7" height="7" />
      <path d="M7 1l4.500 4.500L16 1M11.500 5.500V10M48 41l9 9M57 41l-9 9" />
    </svg>

    <div className="absolute right-[7px] top-[7px] flex items-center gap-2">
      <button aria-label="Minimizar ventana">
        <Icon w={8} h={9}>
          <path d="M0 7.500h8" stroke="#fff" strokeWidth="2" />
        </Icon>
      </button>
      <button aria-label="Restaurar ventana">
        <Icon w={9} h={9}>
          <path d="M2.500 2.500V1h5.500v5.500H6.500M1 3h5.500v5.200H1z" stroke="#fff" strokeWidth="1.400" />
        </Icon>
      </button>
      <button aria-label="Cerrar ventana">
        <Icon w={8} h={9}>
          <path d="M1 1.500l6 6M7 1.500l-6 6" stroke="#fff" strokeWidth="1.500" />
        </Icon>
      </button>
    </div>

    <ViewCube />
    <button className="absolute right-10 top-[135px] flex h-[13px] w-[34px] items-center gap-1 rounded-[3px] border border-[#b1b4bc] bg-[#989ca8] pl-[3px] font-['Liberation_Sans'] text-[8px] leading-[11px] text-[#555b68]">
      SCU
      <Icon w={6} h={4}>
        <path d="M.500.500h5L3 3.500z" stroke="#c4c6ca" strokeWidth="0.7" />
      </Icon>
    </button>
    <NavBar />

    <Sheet2D />
  </main>
);

// ---------- Status bar ----------

type StatusProps = { name: string; className: string; icon: ReactNode; on?: boolean };

const Status = ({ name, className, icon, on }: StatusProps) => (
  <button aria-label={name} className={clsx("flex h-[19px] shrink-0 items-center justify-center", className)}>
    <span className={clsx("flex h-[17px] items-center justify-center", on && "w-[18px] bg-[#5a92cc]")}>
      <Icon>{icon}</Icon>
    </span>
  </button>
);

const StatusCaret = ({ name }: { name: string }) => (
  <button aria-label={name} className="flex h-[19px] w-[15px] shrink-0 items-center justify-center">
    <Caret />
  </button>
);

const StatusGroup = ({ children }: { children: ReactNode }) => (
  <div className="flex items-center border-r border-[#222933] bg-[#343d4a]">{children}</div>
);

const AnnoSign = () => <path d="M6 1h2l1 6 3.500 5-4-1.500L7 8l-1.500 2.500L1.500 12 5 7z" fill="#e6e8ea" stroke="none" />;

const StatusBar = () => (
  <div className="flex text-[9px] text-[#eceef0]">
    <StatusGroup>
      <button className="h-[19px] w-[45px] text-[10px]">MODELO</button>
      <Status name="Rejilla" on className="w-[21px]" icon={<path d="M4.500 1v12M7.500 1v12M10.500 1v12M1 4.500h12M1 7.500h12M1 10.500h12" stroke="#fff" />} />
      <Status
        name="Forzcursor"
        className="w-[16px]"
        icon={<path d="M2 3h2M6 3h2M10 3h2M2 7h2M6 7h2M10 7h2M2 11h2M6 11h2M10 11h2" strokeWidth="2" />}
      />
      <StatusCaret name="Opciones de forzado" />
    </StatusGroup>
    <StatusGroup>
      <Status name="Orto" className="w-[19px]" icon={<path d="M1.500 1v11.500H13M1.500 8.500h4v4" />} />
      <Status
        name="Polar"
        className="w-[19px]"
        icon={
          <>
            <circle cx="6" cy="8" r="5" />
            <path d="M6 8h8M6 8l5.500-6" />
          </>
        }
      />
      <StatusCaret name="Opciones polares" />
      <Status
        name="Isométrico"
        className="w-[16px]"
        icon={
          <>
            <path d="M2 1l10 12" stroke="#c65c5c" />
            <path d="M7 1v12" stroke="#5aa76a" />
            <path d="M3 11l9-7" stroke="#8c9097" />
          </>
        }
      />
      <StatusCaret name="Opciones isométricas" />
    </StatusGroup>
    <StatusGroup>
      <Status name="Rastreo" className="w-[16px]" icon={<path d="M12 2L1.500 12.500H13" />} />
      <Status
        name="Referencia a objetos"
        on
        className="w-[20px]"
        icon={
          <>
            <path d="M3 3.500h9.500v9H3.500v-9" stroke="#fff" />
            <circle cx="3" cy="3" r="1.500" fill="#5a92cc" stroke="#fff" />
          </>
        }
      />
      <StatusCaret name="Opciones de referencia" />
    </StatusGroup>
    <StatusGroup>
      <Status
        name="Visibilidad de anotación"
        on
        className="w-[19px]"
        icon={
          <>
            <AnnoSign />
            <circle cx="11.500" cy="3" r="1.800" />
          </>
        }
      />
      <Status
        name="Escala automática"
        className="w-[19px]"
        icon={
          <>
            <AnnoSign />
            <path d="M12.500 1l-2 2.500h2L11 6" />
          </>
        }
      />
      <Status name="Escala de anotación" className="w-[19px]" icon={<AnnoSign />} />
      <button className="flex h-[19px] w-[27px] items-center justify-end gap-1 pr-1">
        1:1
        <Caret />
      </button>
    </StatusGroup>
    <StatusGroup>
      <Status
        name="Espacio de trabajo"
        className="w-[17px]"
        icon={
          <>
            <circle cx="7" cy="7" r="3.500" strokeWidth="2.500" />
            <path d="M7 .500v3M7 10.500v3M.500 7h3M10.500 7h3M2.400 2.400l2 2M9.600 9.600l2 2M11.600 2.400l-2 2M4.400 9.600l-2 2" strokeWidth="2" />
          </>
        }
      />
      <StatusCaret name="Opciones de espacio" />
    </StatusGroup>
    <StatusGroup>
      <Status name="Supervisor" className="w-[17px]" icon={<path d="M7 1v12M1 7h12" strokeWidth="1.500" />} />
    </StatusGroup>
    <StatusGroup>
      <Status
        name="Regla"
        className="w-[19px]"
        icon={
          <>
            <path d="M4 1h7v12H4z" fill={G} stroke="none" />
            <path d="M8 3h3M9 5h2M8 7h3M9 9h2M8 11h3" stroke="#5b616b" />
          </>
        }
      />
      <button className="flex h-[19px] w-[57px] items-center justify-between pl-1 pr-[3px]">
        Decimal
        <Caret />
      </button>
    </StatusGroup>
    <StatusGroup>
      <Status
        name="Propiedades rápidas"
        className="w-[19px]"
        icon={
          <>
            <path d="M1.500 1.500h4v4h-4zM4 8.500l2.500 4.500H1.500zM8 3.500h3v3" />
            <circle cx="10.500" cy="10" r="2.500" />
          </>
        }
      />
    </StatusGroup>
    <StatusGroup>
      <Status
        name="Interfaz bloqueada"
        className="w-[21px]"
        icon={
          <>
            <circle cx="8" cy="6" r="5.500" fill="#2f7fc1" stroke="none" />
            <path d="M1 1h6M4 1v6M0 4h7" stroke="#8ecbfb" />
            <path d="M0 9h6v4H0z" fill="#f3b43c" stroke="none" />
            <path d="M6 10l2.500 3L14 6.500" stroke="#4fbf5d" strokeWidth="2" />
          </>
        }
      />
      <Status
        name="Rendimiento gráfico"
        className="w-[22px]"
        icon={
          <>
            <circle cx="8" cy="6.500" r="5" />
            <path d="M8 3v4h3" />
            <path d="M0 9h5v4H0z" fill="#f3b43c" stroke="none" />
            <circle cx="10" cy="10.500" r="3" fill="#6cb6ec" stroke="none" />
          </>
        }
      />
    </StatusGroup>
    <StatusGroup>
      <Status name="Pantalla limpia" className="w-[18px]" icon={<path d="M.500 2.500h13v9H.500zM8 5h3v3M6 9.500H3v-3" />} />
      <Status name="Personalización" className="w-[20px]" icon={<path d="M0 2.500h14M0 7.500h14M0 12.500h14" strokeWidth="1.500" />} />
    </StatusGroup>
  </div>
);

const LAYOUTS = ["Presentación1", "Presentación2"];

const Footer = () => (
  <footer className="flex h-[23px] justify-between overflow-hidden border-b border-[#85878d] bg-[#222933] pt-px">
    <div className="flex text-[9px] leading-[14px] text-[#a9aeb6]">
      <button className="ml-2 h-[14px] w-[53px] rounded-b-md bg-[#3b4453] font-bold text-white">Modelo</button>
      {LAYOUTS.map((name) => (
        <button key={name} className="ml-px h-[14px] w-[75px] rounded-b-md bg-[#2d3541]">
          {name}
        </button>
      ))}
      <button aria-label="Nueva presentación" className="ml-[2px] flex h-[14px] w-[17px] items-center justify-center rounded-b-md bg-[#2d3541]">
        <Icon w={7} h={7}>
          <path d="M3.500 0v7M0 3.500h7" stroke="#a9aeb6" strokeWidth="1.300" />
        </Icon>
      </button>
    </div>
    <StatusBar />
  </footer>
);

export default function App() {
  return (
    <div className="flex min-h-screen flex-col bg-[#222933] font-['Noto_Sans','Open_Sans',sans-serif]">
      <Header />
      <Ribbon />
      <FileTabs />
      <Canvas />
      <Footer />
    </div>
  );
}
